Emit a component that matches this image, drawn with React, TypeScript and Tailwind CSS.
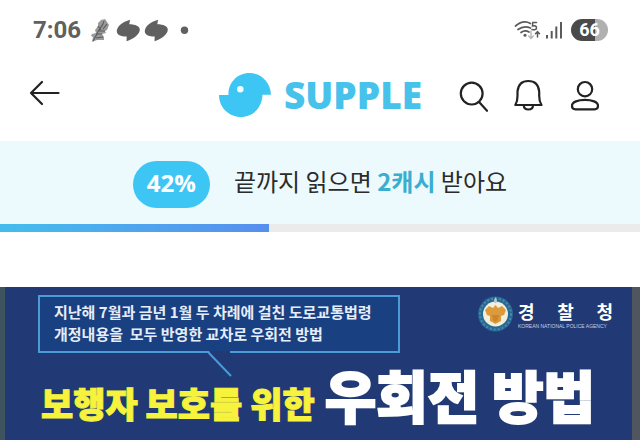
const PROGRESS = 42

function StatusBar() {
    return (
        <div className="flex h-[60px] items-center justify-between pr-8 pl-[33px] text-[#606060]">
            <div className="flex items-center">
                <span className="font-['Roboto',sans-serif] text-2xl leading-6 font-bold">
                    7:06
                </span>
                <svg
                    className="ml-2 h-6 w-[100px]"
                    viewBox="89 18 100 24"
                    fill="currentColor"
                >
                    <path
                        d="M101 20L105 19L107 22L109 25L107 30L105 31L106 33L102 34L104 37L104 40L97 40L92 42L93 37L91 36L92 34L96 33L95 30L98 26L98 23Z"
                        fill="#9a9a9a"
                    />
                    <path
                        d="M104 21C103 27 98 29 97 34L93 41M107 24L103 29M98 26L101 30M96 34L102 34M98 31L105 31M96 38L103 37"
                        stroke="#5a5a5a"
                        strokeWidth="1.1"
                        fill="none"
                    />
                    <path d="M130 19.800L129.300 24.200C135.500 24.200 139.800 26.300 139.800 29.500C139.800 34 134 38.800 126.500 41.200L126.700 36.500C120.500 36.500 116.800 34.500 116.800 31.200C116.800 26.500 122.500 22 130 19.800Z" />
                    <path d="M158 19.800L157.300 24.200C163.500 24.200 167.800 26.300 167.800 29.500C167.800 34 162 38.800 154.500 41.200L154.700 36.500C148.500 36.500 144.800 34.500 144.800 31.200C144.800 26.500 150.500 22 158 19.800Z" />
                    <circle cx="184.500" cy="30.300" r="3.700" />
                </svg>
            </div>
            <div className="flex items-center">
                <svg
                    className="h-6 w-12"
                    viewBox="515 18 48 24"
                    fill="none"
                    stroke="#5a5a5a"
                    strokeWidth="1.700"
                    strokeLinecap="round"
                >
                    <path d="M516.500 26Q524 19.500 531.500 23.500M519 29.500Q525 25 531.500 28M522 32.500Q526 29.500 530 32" />
                    <circle cx="526" cy="35.300" r="1.500" fill="#5a5a5a" stroke="none" />
                    <path d="M537.500 22.500H533.800L533.500 26Q537.500 25 537.500 28Q537 30.500 533 29.500" strokeWidth="1.500" />
                    <path d="M532 31V38M529.700 36L532 38.500L534.300 36" stroke="#b5b5b5" strokeWidth="1.400" />
                    <path d="M538.500 37V32M536.500 33.800L538.500 31.700L540.500 33.800" strokeWidth="1.500" />
                    <path d="M548 35V38.500M552.700 31V38.500M557.300 26.500V38.500M562 22V38.500" strokeWidth="2" strokeLinecap="butt" />
                </svg>
                <span className="ml-[9px] flex h-[22px] w-[37px] items-center justify-center rounded-full bg-linear-to-r from-[#4a4a4a] from-66% to-[#b0b0b0] to-66% font-['Roboto',sans-serif] text-lg leading-5 font-bold text-white">
                    66
                </span>
            </div>
        </div>
    )
}

function Header() {
    return (
        <header className="grid h-[81px] grid-cols-[1fr_auto_1fr] items-center px-7 pb-[11px]">
            <button aria-label="뒤로" className="justify-self-start">
                <svg
                    className="h-8 w-8"
                    viewBox="28 79 32 32"
                    fill="none"
                    stroke="#222"
                    strokeWidth="2.200"
                    strokeLinecap="round"
                    strokeLinejoin="round"
                >
                    <path d="M58.500 93H31M42 82L31 93L42 104" />
                </svg>
            </button>
            <a href="#" className="flex items-center gap-3">
                <svg className="h-[46px] w-[54px]" viewBox="218 72 54 46">
                    <path
                        d="M219 95H228.500C228 83 237 73 249.500 73C261 73 270.500 82 271 94.700H262.500C262 107.500 253 117 241 117C229 117 219 107.500 219 95Z"
                        fill="#3dc6f3"
                    />
                    <circle cx="240.300" cy="89.300" r="3.300" fill="#f2fcff" />
                </svg>
                <span className="font-['Open_Sans',sans-serif] text-[37px] leading-10 font-extrabold text-[#47c2eb]">
                    SUPPLE
                </span>
            </a>
            <nav className="mr-3 flex gap-[26px] justify-self-end text-[#222]">
                <button aria-label="검색">
                    <svg
                        className="h-9 w-[30px]"
                        viewBox="458 77 30 36"
                        fill="none"
                        stroke="currentColor"
                        strokeWidth="2.200"
                        strokeLinecap="round"
                    >
                        <circle cx="471.700" cy="93.600" r="10.900" />
                        <path d="M479.300 102.300L487 110.800" />
                    </svg>
                </button>
                <button aria-label="알림">
                    <svg
                        className="h-9 w-[30px]"
                        viewBox="514 77 30 36"
                        fill="none"
                        stroke="currentColor"
                        strokeWidth="2.200"
                        strokeLinejoin="round"
                    >
                        <path d="M515.300 105Q517.500 101.500 517.500 96V91.500Q518.500 81 528.300 81Q538.200 81 539.200 91.500V96Q539.200 101.500 541.500 105Z" />
                        <path d="M523.800 105.500C524 110.800 532.800 110.800 533 105.500" />
                    </svg>
                </button>
                <button aria-label="내 정보">
                    <svg
                        className="h-9 w-[30px]"
                        viewBox="570 77 30 36"
                        fill="none"
                        stroke="currentColor"
                        strokeWidth="2.200"
                    >
                        <circle cx="585" cy="89.200" r="7.200" />
                        <path d="M572 106C571.500 97.800 598.500 97.800 598 106Q598 109.300 594.500 109.300H575.500Q572 109.300 572 106Z" />
                    </svg>
                </button>
            </nav>
        </header>
    )
}

function RewardBanner() {
    return (
        <section>
            <div className="flex h-[83px] items-start justify-center gap-6 bg-[#ecfafe] pt-5">
                <span className="flex h-[47px] w-[77px] items-center justify-center rounded-full bg-[#3dc6f3] pb-1 font-['Open_Sans',sans-serif] text-2xl font-bold text-white">
                    {PROGRESS}%
                </span>
                <p className="text-2xl leading-10 text-[#2b2b2b]">
                    끝까지 읽으면{' '}
                    <strong className="font-bold text-[#3aaed0]">2캐시</strong>{' '}
                    받아요
                </p>
            </div>
            <div
                role="progressbar"
                aria-label="읽기 진행률"
                aria-valuenow={PROGRESS}
                className="h-2 bg-[#ebebeb]"
            >
                <div
                    className="h-full bg-linear-to-r from-[#43bdec] to-[#568eee]"
                    style={{ width: `${PROGRESS}%` }}
                />
            </div>
        </section>
    )
}

function PoliceEmblem() {
    return (
        <svg className="h-[38px] w-[37px]" viewBox="0 0 37 38">
            <circle cx="18.500" cy="19" r="17.500" fill="#286894" />
            <circle
                cx="18.500"
                cy="19"
                r="15.500"
                fill="none"
                stroke="#4a8aa8"
                strokeWidth="2"
                strokeDasharray="2 2"
            />
            <circle cx="18.500" cy="19" r="12.500" fill="#f1eedc" />
            <path d="M17 5L18.500 2L20 5L19.500 8H17.500Z" fill="#aecbd0" />
            <path
                d="M18.500 10L21 13L25 11L29 15L27 20L24 21V26L18.500 29L13 26V21L10 20L8 15L12 11L16 13Z"
                fill="#dd9a3c"
            />
            <path d="M15 20H22L21 25L18.500 27L16 25Z" fill="#c98630" />
        </svg>
    )
}

function Poster() {
    return (
        <article className="mt-[55px] border-r-8 border-l-[5px] border-r-[#50565f] border-l-[#40545f] bg-[#213a75] pt-2 pb-6 pl-[33px]">
            <div className="flex items-start justify-between pr-[19px]">
                <div className="relative border-2 border-[#4b9bd7] bg-[#194080] pt-1 pr-[26px] pb-1.5 pl-[14px]">
                    <p className="text-[15px] leading-[22px] font-bold whitespace-pre text-[#e6edfa]">
                        지난해 7월과 금년 1월 두 차례에 걸친 도로교통법령
                        <br />
                        {'개정내용을  모두 반영한 교차로 우회전 방법'}
                    </p>
                    <svg
                        className="absolute top-[54px] left-[166px] h-7 w-7"
                        viewBox="0 0 28 28"
                    >
                        <path d="M3 0H24V5H6Z" fill="#213a75" />
                        <path
                            d="M2 1L25 25"
                            stroke="#4b9bd7"
                            strokeWidth="2"
                        />
                    </svg>
                </div>
                <div className="flex items-start gap-1">
                    <PoliceEmblem />
                    <div className="w-[95px] pt-1 text-white">
                        <p className="flex justify-between text-lg leading-6 font-bold">
                            <span>경</span>
                            <span>찰</span>
                            <span>청</span>
                        </p>
                        <p className="font-['Liberation_Sans',sans-serif] text-[5px] leading-[6px] whitespace-nowrap text-[#c3cfe8]">
                            KOREAN NATIONAL POLICE AGENCY
                        </p>
                    </div>
                </div>
            </div>
            <h1 className="flex items-end gap-2.5 pt-3 pl-[3px] font-black whitespace-nowrap">
                <span className="text-[35px] leading-10 text-[#f7f23c] [-webkit-text-stroke:1px_#f7f23c]">
                    보행자 보호를 위한
                </span>
                <span className="text-[56px] leading-[58px] text-white [-webkit-text-stroke:2px_white]">
                    우회전 방법
                </span>
            </h1>
        </article>
    )
}

export default function App() {
    return (
        <main className="w-full overflow-hidden bg-white font-['Noto_Sans_CJK_KR',sans-serif]">
            <StatusBar />
            <Header />
            <RewardBanner />
            <Poster />
        </main>
    )
}
